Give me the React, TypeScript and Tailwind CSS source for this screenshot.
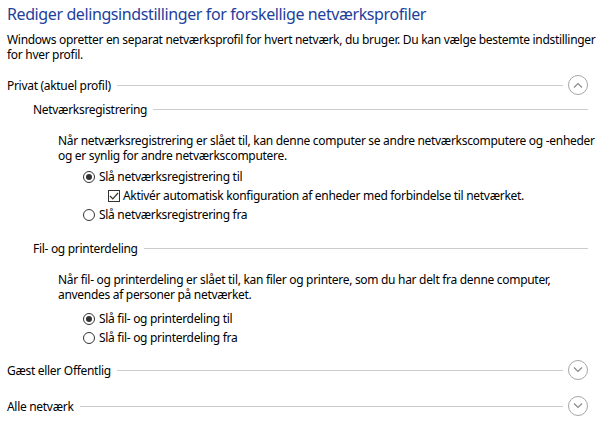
import React from 'react';

function Chevron({ up }: { up?: boolean }) {
  return (
    <div className="w-[20px] h-[20px] rounded-full border border-[#a6a6a6] flex items-center justify-center shrink-0">
      <svg width="10" height="6" viewBox="0 0 10 6" fill="none">
        <path d={up ? 'M1 5.5 L5 1.5 L9 5.5' : 'M1 0.5 L5 4.5 L9 0.5'} stroke="#8a8a8a" strokeWidth="1.2" />
      </svg>
    </div>
  );
}

function Section({ title, up }: { title: string; up?: boolean }) {
  return (
    <div className="flex items-center h-[20px]">
      <span className="whitespace-nowrap">{title}</span>
      <div className="flex-1 h-px bg-[#cccccc] ml-[6px] mr-[5px]" />
      <Chevron up={up} />
    </div>
  );
}

function SubHeader({ title }: { title: string }) {
  return (
    <div className="flex items-center h-[15px] pl-[26px]">
      <span className="whitespace-nowrap">{title}</span>
      <div className="flex-1 h-px bg-[#cccccc] ml-[6px]" />
    </div>
  );
}

function Radio({ checked, label }: { checked?: boolean; label: string }) {
  return (
    <div className="flex items-center h-[19px]">
      <div className="w-[12px] h-[12px] rounded-full border border-[#333333] flex items-center justify-center mr-[4px]">
        {checked && <div className="w-[6px] h-[6px] rounded-full bg-[#333333]" />}
      </div>
      <span className="whitespace-nowrap">{label}</span>
    </div>
  );
}

function Check({ label }: { label: string }) {
  return (
    <div className="flex items-center h-[19px] pl-[25px]">
      <div className="w-[12px] h-[12px] border border-[#333333] flex items-center justify-center mr-[3px]">
        <svg width="10" height="8" viewBox="0 0 10 8" fill="none">
          <path d="M1 4 L3.8 6.8 L9 1" stroke="#333333" strokeWidth="1.2" />
        </svg>
      </div>
      <span className="whitespace-nowrap">{label}</span>
    </div>
  );
}

export default function App() {
  return (
    <div className="w-[607px] h-[426px] bg-white text-black text-[12px] leading-[15px] tracking-[-0.3px] font-['Segoe_UI','Noto_Sans',sans-serif] pl-[7px] pr-[19px] overflow-hidden">
      <h1 className="text-[16px] leading-[26px] pt-[1px] tracking-[-0.4px] text-[#1e3f9c] whitespace-nowrap">
        Rediger delingsindstillinger for forskellige netværksprofiler
      </h1>
      <p className="mt-[5px] -mr-[10px]">
        Windows opretter en separat netværksprofil for hvert netværk, du bruger. Du kan vælge bestemte indstillinger for hver profil.
      </p>

      <div className="mt-[13px]">
        <Section title="Privat (aktuel profil)" up />
      </div>

      <div className="mt-[7px]">
        <SubHeader title="Netværksregistrering" />
      </div>
      <div className="pl-[51px]">
        <div className="mt-[16px] -mr-[10px]">
          <p className="whitespace-nowrap">Når netværksregistrering er slået til, kan denne computer se andre netværkscomputere og -enheder</p>
          <p className="whitespace-nowrap">og er synlig for andre netværkscomputere.</p>
        </div>
        <div className="mt-[4px] pl-[25px]">
          <Radio checked label="Slå netværksregistrering til" />
          <Check label="Aktivér automatisk konfiguration af enheder med forbindelse til netværket." />
          <Radio label="Slå netværksregistrering fra" />
        </div>
      </div>

      <div className="mt-[17px]">
        <SubHeader title="Fil- og printerdeling" />
      </div>
      <div className="pl-[51px]">
        <div className="mt-[16px]">
          <p className="whitespace-nowrap">Når fil- og printerdeling er slået til, kan filer og printere, som du har delt fra denne computer,</p>
          <p className="whitespace-nowrap">anvendes af personer på netværket.</p>
        </div>
        <div className="mt-[7px] pl-[25px]">
          <Radio checked label="Slå fil- og printerdeling til" />
          <Radio label="Slå fil- og printerdeling fra" />
        </div>
      </div>

      <div className="mt-[13px]">
        <Section title="Gæst eller Offentlig" />
      </div>
      <div className="mt-[16px]">
        <Section title="Alle netværk" />
      </div>
    </div>
  );
}
